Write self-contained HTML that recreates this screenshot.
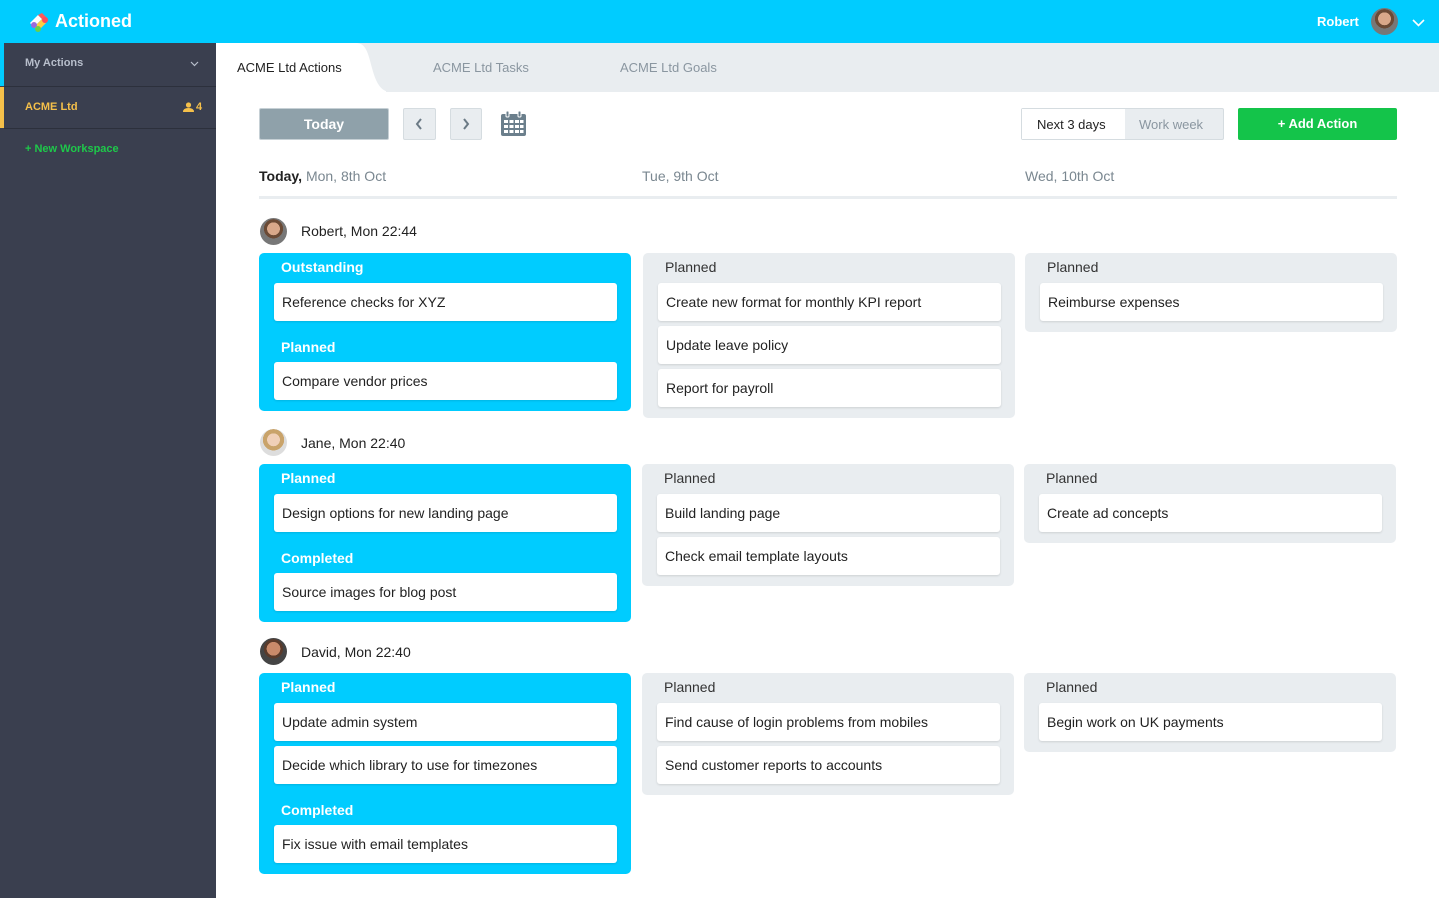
<!DOCTYPE html>
<html><head><meta charset="utf-8"><style>
*{box-sizing:border-box;margin:0;padding:0}
body{width:1439px;height:898px;overflow:hidden;font-family:"Liberation Sans",sans-serif;font-size:14px;color:#222;background:#fff;position:relative}
.top{position:absolute;left:0;top:0;width:1439px;height:43px;background:#00ccff}
.logo{position:absolute;left:55px;top:11px;color:#fff;font-weight:bold;font-size:18px}
.side{position:absolute;left:0;top:43px;width:216px;height:855px;background:#3a3f4f}
.tabs{position:absolute;left:216px;top:43px;width:1223px;height:49px;background:#e9edf0}
.tab{position:absolute;top:18px;font-size:13px;color:#8a96a0}
.btn{position:absolute;border-radius:2px}
.ab{position:absolute}
.col{position:absolute;width:372px;border-radius:5px;padding:0 14px 6px 15px;background:#e9edf0}
.col.c{background:#00ccff}
.h{padding-top:5px;height:30px;line-height:18px;padding-left:7px;color:#333}
.h.n{padding-top:12px;height:36px}
.c .h{color:#fff;font-weight:bold}
.it{height:38px;background:#fff;border-radius:3px;margin-bottom:5px;line-height:38px;padding-left:8px;box-shadow:0 1px 2px rgba(0,0,0,.12)}
.who{position:absolute;left:301px;font-size:14px}
.av{position:absolute;left:260px;width:27px;height:27px;border-radius:50%;background:radial-gradient(circle at 50% 40%,#d9a88a 0 30%,#6b4a35 31% 45%,#777 46%)}
</style></head><body>
<div class="top"></div>
<svg class="ab" style="left:28px;top:13px" width="24" height="20" viewBox="0 0 24 20"><path d="M2 10 L10 2 L14 6 L6 14Z" fill="#fff"/><path d="M10 2 L14 0 L20 6 L14 6Z" fill="#ff5a5a"/><path d="M6 14 L14 6 L18 10 L10 18Z" fill="#ffcc44"/><circle cx="6" cy="12" r="3" fill="#9b6bdc"/><circle cx="10" cy="16" r="3" fill="#6ad04a"/><circle cx="17" cy="7" r="3" fill="#ff4b5a"/></svg>
<div class="logo">Actioned</div>
<div class="ab" style="left:1317px;top:14px;color:#fff;font-weight:bold;font-size:13px">Robert</div>
<div class="ab" style="left:1371px;top:8px;width:27px;height:27px;border-radius:50%;background:radial-gradient(circle at 50% 40%,#d9a88a 0 30%,#6b4a35 31% 45%,#777 46%)"></div>
<svg class="ab" style="left:1412px;top:19px" width="13" height="8"><path d="M1 1 L6.5 6.5 L12 1" stroke="#fff" stroke-width="1.6" fill="none"/></svg>

<div class="side"></div>
<div class="ab" style="left:0;top:43px;width:4px;height:43px;background:#00ccff"></div>
<div class="ab" style="left:4px;top:86px;width:212px;height:1px;background:#2c303c"></div>
<div class="ab" style="left:25px;top:57px;color:#b8bfcc;font-weight:bold;font-size:11px">My Actions</div>
<svg class="ab" style="left:190px;top:61px" width="9" height="6"><path d="M1 1 L4.5 4.5 L8 1" stroke="#b8bfcc" stroke-width="1.2" fill="none"/></svg>
<div class="ab" style="left:0;top:87px;width:4px;height:41px;background:#f5c04a"></div>
<div class="ab" style="left:4px;top:128px;width:212px;height:1px;background:#2c303c"></div>
<div class="ab" style="left:25px;top:101px;color:#f5c04a;font-weight:bold;font-size:11px">ACME Ltd</div>
<svg class="ab" style="left:183px;top:102px" width="11" height="10"><circle cx="5.5" cy="3" r="2.6" fill="#f5c04a"/><path d="M0 10 Q0 6 5.5 6 Q11 6 11 10Z" fill="#f5c04a"/></svg>
<div class="ab" style="left:196px;top:101px;color:#f5c04a;font-weight:bold;font-size:11px">4</div>
<div class="ab" style="left:25px;top:143px;color:#1ec84a;font-weight:bold;font-size:11px">+ New Workspace</div>

<div class="tabs"></div>
<svg class="ab" style="left:216px;top:43px" width="170" height="49"><path d="M0 0 H140 C150 0 152 10 156 25 C160 40 165 49 175 49 H0Z" fill="#fff"/></svg>
<div class="tab" style="left:237px;top:60px;color:#222">ACME Ltd Actions</div>
<div class="tab" style="left:433px;top:60px">ACME Ltd Tasks</div>
<div class="tab" style="left:620px;top:60px">ACME Ltd Goals</div>

<div class="btn" style="left:259px;top:108px;width:130px;height:32px;background:#8fa1aa;border:1px solid #c6d0d5;color:#fff;font-weight:bold;text-align:center;line-height:30px">Today</div>
<div class="btn" style="left:403px;top:108px;width:33px;height:32px;background:#e9edf0;border:1px solid #d5dce0"></div>
<svg class="ab" style="left:415px;top:118px" width="8" height="12"><path d="M6 1 L2 6 L6 11" stroke="#6b7a85" stroke-width="2" fill="none"/></svg>
<div class="btn" style="left:450px;top:108px;width:32px;height:32px;background:#e9edf0;border:1px solid #d5dce0"></div>
<svg class="ab" style="left:462px;top:118px" width="8" height="12"><path d="M2 1 L6 6 L2 11" stroke="#6b7a85" stroke-width="2" fill="none"/></svg>
<svg class="ab" style="left:500px;top:110px" width="27" height="27" viewBox="0 0 27 27"><rect x="1" y="4" width="25" height="22" rx="2" fill="#6b7f8c"/><rect x="6" y="1" width="3" height="6" rx="1" fill="#6b7f8c" stroke="#fff" stroke-width="1"/><rect x="18" y="1" width="3" height="6" rx="1" fill="#6b7f8c" stroke="#fff" stroke-width="1"/><g fill="#fff"><rect x="4" y="10" width="4" height="3"/><rect x="9.5" y="10" width="4" height="3"/><rect x="15" y="10" width="4" height="3"/><rect x="20" y="10" width="3.5" height="3"/><rect x="4" y="15" width="4" height="3"/><rect x="9.5" y="15" width="4" height="3"/><rect x="15" y="15" width="4" height="3"/><rect x="20" y="15" width="3.5" height="3"/><rect x="4" y="20" width="4" height="3"/><rect x="9.5" y="20" width="4" height="3"/><rect x="15" y="20" width="4" height="3"/><rect x="20" y="20" width="3.5" height="3"/></g></svg>

<div class="btn" style="left:1021px;top:108px;width:203px;height:32px;border:1px solid #d5dce0;background:#e9edf0"></div>
<div class="ab" style="left:1022px;top:109px;width:103px;height:30px;background:#fff"></div>
<div class="ab" style="left:1037px;top:117px;font-size:13px">Next 3 days</div>
<div class="ab" style="left:1139px;top:117px;font-size:13px;color:#8a96a0">Work week</div>
<div class="btn" style="left:1238px;top:108px;width:159px;height:32px;background:#14c44a;color:#fff;font-weight:bold;text-align:center;line-height:32px;font-size:13px">+ Add Action</div>

<div class="ab" style="left:259px;top:168px"><b>Today,</b> <span style="color:#7a8790">Mon, 8th Oct</span></div>
<div class="ab" style="left:642px;top:168px;color:#7a8790">Tue, 9th Oct</div>
<div class="ab" style="left:1025px;top:168px;color:#7a8790">Wed, 10th Oct</div>
<div class="ab" style="left:259px;top:196px;width:1138px;height:3px;background:#e9edf0"></div>

<div class="av" style="top:218px"></div><div class="who" style="top:223px">Robert, Mon 22:44</div>
<div class="col c" style="left:259px;top:253px"><div class="h">Outstanding</div><div class="it">Reference checks for XYZ</div><div class="h n">Planned</div><div class="it">Compare vendor prices</div></div>
<div class="col" style="left:643px;top:253px"><div class="h">Planned</div><div class="it">Create new format for monthly KPI report</div><div class="it">Update leave policy</div><div class="it">Report for payroll</div></div>
<div class="col" style="left:1025px;top:253px"><div class="h">Planned</div><div class="it">Reimburse expenses</div></div>

<div class="av" style="top:429px;background:radial-gradient(circle at 50% 40%,#f0d0b8 0 30%,#c9a36a 31% 50%,#ddd 51%)"></div><div class="who" style="top:435px">Jane, Mon 22:40</div>
<div class="col c" style="left:259px;top:464px"><div class="h">Planned</div><div class="it">Design options for new landing page</div><div class="h n">Completed</div><div class="it">Source images for blog post</div></div>
<div class="col" style="left:642px;top:464px"><div class="h">Planned</div><div class="it">Build landing page</div><div class="it">Check email template layouts</div></div>
<div class="col" style="left:1024px;top:464px"><div class="h">Planned</div><div class="it">Create ad concepts</div></div>

<div class="av" style="top:638px;background:radial-gradient(circle at 50% 40%,#c98a6a 0 32%,#5a3a2a 33% 45%,#444 46%)"></div><div class="who" style="top:644px">David, Mon 22:40</div>
<div class="col c" style="left:259px;top:673px"><div class="h">Planned</div><div class="it">Update admin system</div><div class="it">Decide which library to use for timezones</div><div class="h n">Completed</div><div class="it">Fix issue with email templates</div></div>
<div class="col" style="left:642px;top:673px"><div class="h">Planned</div><div class="it">Find cause of login problems from mobiles</div><div class="it">Send customer reports to accounts</div></div>
<div class="col" style="left:1024px;top:673px"><div class="h">Planned</div><div class="it">Begin work on UK payments</div></div>
</body></html>
